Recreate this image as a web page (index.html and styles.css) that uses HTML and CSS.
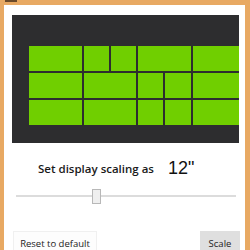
FILE: index.html
```html
<!DOCTYPE html>
<html>
<head>
<meta charset="utf-8">
<link rel="stylesheet" href="styles.css">
</head>
<body>
<div class="topband"><div class="tab"></div></div>
<div class="window">
  <div class="panel">
    <div class="tiles">
      <div class="t"></div><div class="t"></div><div class="t"></div><div class="t s2"></div><div class="t"></div>
      <div class="t"></div><div class="t s2"></div><div class="t"></div><div class="t"></div><div class="t"></div>
      <div class="t"></div><div class="t s2"></div><div class="t"></div><div class="t"></div><div class="t"></div>
    </div>
  </div>
  <div class="label-row">
    <span class="label">Set display scaling as</span>
    <span class="size">12"</span>
  </div>
  <div class="slider">
    <div class="track"></div>
    <div class="thumb"></div>
  </div>
  <div class="buttons">
    <button class="btn reset">Reset to default</button>
    <button class="btn scale">Scale</button>
  </div>
</div>
</body>
</html>
```
FILE: styles.css
```css
html, body {
  margin: 0;
  padding: 0;
}
body {
  background: #e8a963;
  width: 250px;
  height: 250px;
  overflow: hidden;
  font-family: "Open Sans", "Noto Sans", sans-serif;
}
.topband {
  height: 5px;
  padding-left: 5px;
}
.tab {
  width: 12px;
  height: 2px;
  background: #6b4a2a;
}
.window {
  margin-left: 4px;
  width: 241px;
  height: 245px;
  background: #ffffff;
  padding-top: 10px;
  box-sizing: border-box;
}
.panel {
  margin-left: 8px;
  width: 227px;
  height: 128px;
  background: #2d2d2f;
  padding: 31px 0 0 17px;
  box-sizing: border-box;
  overflow: hidden;
}
.tiles {
  display: grid;
  grid-template-columns: 53px 25px 25px 25px 26px 60px;
  grid-template-rows: 25px 25px 25px;
  gap: 2px;
  width: 240px;
}
.t {
  background: #70cf00;
}
.s2 {
  grid-column: span 2;
}
.label-row {
  display: flex;
  align-items: center;
  margin-top: 15px;
  padding-left: 34px;
  height: 20px;
}
.label {
  font-family: "Open Sans", sans-serif;
  font-weight: 600;
  font-size: 11.5px;
  color: #1a1a1a;
}
.size {
  margin-left: 14px;
  font-family: "Liberation Sans", Arial, sans-serif;
  font-size: 18px;
  color: #111;
}
.slider {
  position: relative;
  margin: 11px 0 0 12px;
  width: 220px;
  height: 14px;
  display: flex;
  align-items: center;
}
.track {
  width: 100%;
  height: 2px;
  background: #dcdcdc;
}
.thumb {
  position: absolute;
  left: 76px;
  top: 0;
  width: 7px;
  height: 13px;
  background: #efefef;
  border: 1px solid #b8b8b8;
}
.buttons {
  display: flex;
  justify-content: space-between;
  margin-top: 28px;
  padding: 0 5px 0 9px;
}
.btn {
  font-family: "Open Sans", sans-serif;
  font-size: 9.5px;
  color: #222;
  height: 24px;
  border: 1px solid #f0f0f0;
  padding: 0;
}
.reset {
  width: 84px;
  background: #fdfdfd;
}
.scale {
  width: 40px;
  background: #dfdfdf;
  border-color: #dfdfdf;
}
```
